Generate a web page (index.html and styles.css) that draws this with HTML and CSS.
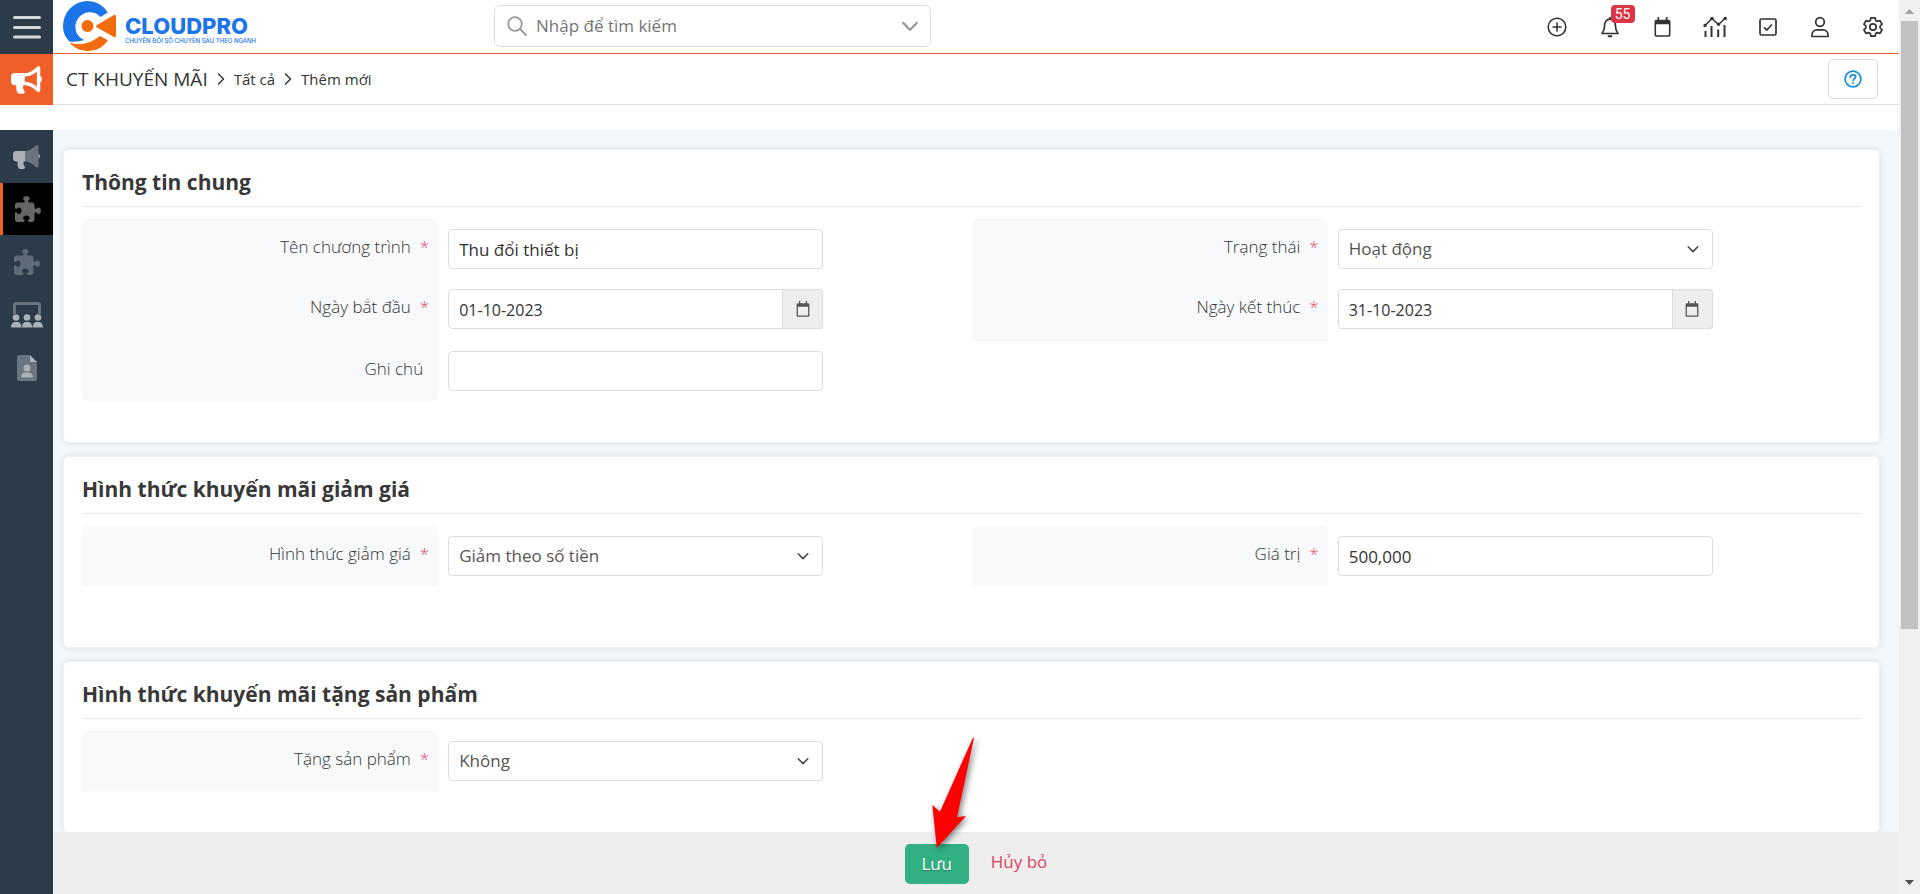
FILE: index.html
```html
<!DOCTYPE html>
<html lang="vi">
<head>
<meta charset="utf-8">
<meta name="viewport" content="width=device-width, initial-scale=1">
<title>CT Khuyến mãi - Thêm mới</title>
<link rel="stylesheet" href="styles.css">
</head>
<body>
<svg class="defs" aria-hidden="true">
  <symbol id="i-puzzle" viewBox="0 0 512 512"><path d="M192 104.8c0-9.2-5.8-17.3-13.2-22.8C167.2 73.3 160 61.3 160 48c0-26.5 28.7-48 64-48s64 21.5 64 48c0 13.3-7.2 25.3-18.8 34c-7.4 5.5-13.2 13.6-13.2 22.8c0 12.8 10.4 23.2 23.2 23.2H336c26.5 0 48 21.5 48 48v56.8c0 12.8 10.4 23.2 23.2 23.2c9.2 0 17.3-5.8 22.8-13.2c8.7-11.6 20.7-18.8 34-18.8c26.5 0 48 28.7 48 64s-21.5 64-48 64c-13.3 0-25.3-7.2-34-18.8c-5.5-7.4-13.6-13.2-22.8-13.2c-12.8 0-23.2 10.4-23.2 23.2V464c0 26.5-21.5 48-48 48H279.2c-12.8 0-23.2-10.4-23.2-23.2c0-9.2 5.8-17.3 13.2-22.8c11.6-8.7 18.8-20.7 18.8-34c0-26.5-28.7-48-64-48s-64 21.5-64 48c0 13.3 7.2 25.3 18.8 34c7.4 5.5 13.2 13.6 13.2 22.8c0 12.8-10.4 23.2-23.2 23.2H48c-26.5 0-48-21.5-48-48V343.2C0 330.4 10.4 320 23.2 320c9.2 0 17.3 5.8 22.8 13.2C54.7 344.8 66.7 352 80 352c26.5 0 48-28.7 48-64s-21.5-64-48-64c-13.3 0-25.3 7.2-34 18.8C40.5 250.2 32.4 256 23.2 256C10.4 256 0 245.6 0 232.8V176c0-26.5 21.5-48 48-48H168.8c12.8 0 23.2-10.4 23.2-23.2z"/></symbol>
  <symbol id="i-chevron-down" viewBox="0 0 16 16"><path d="M2.500 5.500 8 11l5.500-5.500" fill="none" stroke="currentColor" stroke-width="1.700" stroke-linecap="round" stroke-linejoin="round"/></symbol>
  <symbol id="i-chevron-right" viewBox="0 0 8 14"><path d="M1.500 2 6.500 7l-5 5" fill="none" stroke="currentColor" stroke-width="1.500" stroke-linecap="round" stroke-linejoin="round"/></symbol>
  <symbol id="i-calendar" viewBox="0 0 18 20"><path d="M1 18V4.500A1.800 1.800 0 0 1 2.800 2.700H4V0h1.600v2.700h6.800V0H14v2.700h1.200A1.800 1.800 0 0 1 17 4.500V18a1.800 1.800 0 0 1-1.800 1.800H2.800A1.800 1.800 0 0 1 1 18zM2.600 7.200V17.400c0 .5.300.8.800.8h11.200c.5 0 .8-.3.800-.8V7.200z" fill="currentColor" fill-rule="evenodd"/></symbol>
</svg>

<div class="app">
  <header class="topbar">
    <button class="menu-toggle" type="button" aria-label="Menu">
      <svg width="28" height="24" viewBox="0 0 28 24" fill="none" stroke="#d6d9dc" stroke-width="3" stroke-linecap="round"><path d="M1.500 2.500h25M1.500 12.500h25M1.500 22h25"/></svg>
    </button>
    <a class="logo" href="#" aria-label="CloudPro">
      <svg width="54" height="52" viewBox="0 0 54 52">
        <path d="M44.800 12.600A24.500 25 0 0 0 24.500 1 24.500 25 0 0 0 0 26c0 6.500 2.500 12 6.800 15.700 5 .3 10-.2 14.200-1.600A14.500 14.500 0 1 1 37.500 17z" fill="#1b74e8"/>
        <path d="M6.500 42.600c6 2.200 12 2.200 18 .2 5-1.700 9-4 12.500-6.800l8 4.200C40.500 47 33 51 24.500 51 17.500 51 11 48 6.500 42.600z" fill="#f26c0d"/>
        <circle cx="24.500" cy="26" r="6" fill="#f26c0d"/>
        <path d="M34 25 51 15q2-1 2 1.500v19q0 2.500-2 1.500L34 27.500q-2-1.200 0-2.500z" fill="#f26c0d"/>
      </svg>
      <span class="logo-text">
        <span class="logo-name">CLOUDPRO</span>
        <span class="logo-tag">CHUYỂN ĐỔI SỐ CHUYÊN SÂU THEO NGÀNH</span>
      </span>
    </a>
    <div class="search">
      <svg width="20" height="20" viewBox="0 0 20 20" fill="none" stroke="#999" stroke-width="1.800" stroke-linecap="round"><circle cx="8" cy="8" r="6.800"/><path d="m13 13 6 6"/></svg>
      <input type="text" class="search-input" placeholder="Nhập để tìm kiếm" aria-label="Tìm kiếm">
      <svg class="search-caret" width="20" height="20"><use href="#i-chevron-down"/></svg>
    </div>
    <nav class="actions">
      <button type="button" aria-label="Thêm"><svg width="20" height="20" viewBox="0 0 20 20" fill="none" stroke="currentColor" stroke-width="1.600"><circle cx="10" cy="10" r="8.800"/><path d="M10 5.500v9M5.500 10h9"/></svg></button>
      <button type="button" aria-label="Thông báo"><svg width="20" height="22" viewBox="0 0 20 22"><path d="M10 1v2M2 17.500h16c-2.200-2.800-2.600-4-2.600-8A5.400 5.800 0 0 0 10 3.200a5.400 5.800 0 0 0-5.400 6.300c0 4-.4 5.200-2.600 8z" fill="none" stroke="currentColor" stroke-width="1.700" stroke-linejoin="round"/><path d="M7.500 19.300h5a2.500 2.300 0 0 1-5 0z" fill="currentColor"/></svg><span class="badge">55</span></button>
      <button type="button" aria-label="Lịch"><svg width="19" height="20"><use href="#i-calendar"/></svg></button>
      <button type="button" aria-label="Báo cáo"><svg width="24" height="22" viewBox="0 0 24 22" fill="none" stroke="currentColor" stroke-width="1.600"><path d="M2.500 15v6M8.500 10v11M15.200 13.500V21M21.500 9v12" stroke-width="2"/><path d="m2 9.500 7-7 6.500 6L22 2.500"/><g fill="currentColor" stroke="none"><circle cx="2" cy="9.500" r="1.700"/><circle cx="9" cy="2.500" r="1.800"/><circle cx="15.500" cy="8.300" r="1.700"/><circle cx="22.200" cy="2.500" r="1.700"/></g></svg></button>
      <button type="button" aria-label="Công việc"><svg width="18" height="18" viewBox="0 0 18 18" fill="none" stroke="currentColor" stroke-width="1.700"><rect x="1" y="1" width="16" height="16" rx="1.500"/><path d="m5 9.300 2.800 2.700L13 6.500"/></svg></button>
      <button type="button" aria-label="Tài khoản"><svg width="18" height="22" viewBox="0 0 18 22" fill="none" stroke="currentColor" stroke-width="1.700" stroke-linejoin="round"><circle cx="9" cy="6" r="4.300"/><path d="M1 20.500v-1.700a5 5 0 0 1 5-5h6a5 5 0 0 1 5 5v1.700z"/></svg></button>
      <button type="button" aria-label="Cài đặt"><svg width="22" height="22" viewBox="0 0 22 22" fill="none" stroke="currentColor" stroke-width="1.700" stroke-linejoin="round"><circle cx="11" cy="11" r="3.200"/><path d="M8.900 1.800h4.200l.6 2.700 1.600.9 2.700-.8 2.100 3.600-2 1.900v1.800l2 1.900-2.100 3.600-2.700-.8-1.600.9-.6 2.700H8.900l-.6-2.700-1.600-.9-2.700.8-2.100-3.600 2-1.900v-1.800l-2-1.900L4 4.600l2.700.8 1.600-.9z"/></svg></button>
    </nav>
  </header>

  <div class="crumbbar">
    <div class="module-icon">
      <svg width="31" height="30" viewBox="0 0 576 512" fill="#fff"><path d="M576 240c0-23.630-12.950-44.040-32-55.120V32.010C544 23.260 537.020 0 512 0c-7.120 0-14.190 2.380-19.980 7.020l-85.030 68.030C364.280 109.190 310.660 128 256 128H64c-35.350 0-64 28.650-64 64v96c0 35.350 28.650 64 64 64h33.700c-1.390 10.480-2.180 21.140-2.180 32 0 39.770 9.260 77.350 25.560 110.940 5.190 10.690 16.520 17.060 28.400 17.060h74.280c26.050 0 41.690-29.840 25.900-50.560-16.400-21.520-26.150-48.360-26.150-77.440 0-11.110 1.620-21.790 4.410-32H256c54.660 0 108.280 18.810 150.980 52.950l85.030 68.030a32.023 32.023 0 0 0 19.980 7.020c24.920 0 32-22.780 32-32V295.130C563.050 284.040 576 263.630 576 240zm-96 141.420l-33.050-26.440C392.950 311.780 325.120 288 256 288v-96c69.120 0 136.950-23.780 190.950-66.980L480 98.580v282.840z"/></svg>
    </div>
    <nav class="crumbs" aria-label="Breadcrumb">
      <a class="crumb-module" href="#">CT KHUYẾN MÃI</a>
      <svg width="8" height="14"><use href="#i-chevron-right"/></svg>
      <a href="#">Tất cả</a>
      <svg width="8" height="14"><use href="#i-chevron-right"/></svg>
      <a href="#">Thêm mới</a>
    </nav>
    <button class="help" type="button" aria-label="Trợ giúp">
      <svg width="18" height="18" viewBox="0 0 18 18" fill="none" stroke="#1490d4" stroke-width="1.700"><circle cx="9" cy="9" r="7.900"/><path d="M6.300 7.200c0-1.500 1-2.400 2.600-2.400s2.800.8 2.800 2.200c0 1.600-2.600 1.700-2.600 3.500" stroke-linecap="round"/><circle cx="9.100" cy="12.900" r="1" fill="#1490d4" stroke="none"/></svg>
    </button>
  </div>

  <div class="main">
    <nav class="sidebar">
      <a href="#" aria-label="Chiến dịch"><svg width="27" height="26" viewBox="0 0 576 512"><path fill="#68747e" d="M544 32c0-9-7-32-32-32-7 0-14 2-20 7l-85 68c-43 34-96 53-151 53h-10v224h10c55 0 108 19 151 53l85 68c6 5 13 7 20 7 25 0 32-23 32-32z"/><path fill="#abb1b7" d="M256 128H64c-35 0-64 29-64 64v96c0 35 29 64 64 64h34c-8 50 0 100 23 143 5 11 17 17 28 17h75c26 0 41-30 26-51-27-32-31-76-22-109h28zM544 185v110c19-11 32-31 32-55s-13-44-32-55z"/></svg></a>
      <a class="current" href="#" aria-label="CT Khuyến mãi"><svg width="26" height="26" fill="#666"><use href="#i-puzzle"/></svg></a>
      <a href="#" aria-label="Tiện ích"><svg width="26" height="26" fill="#5f6b76"><use href="#i-puzzle"/></svg></a>
      <a href="#" aria-label="Sự kiện"><svg width="32" height="26" viewBox="0 0 32 26"><path d="M2 12V3a3 3 0 0 1 3-3h22a3 3 0 0 1 3 3v9h-3V3H5v9z" fill="#68747e"/><g fill="#abb1b7"><circle cx="5" cy="15.500" r="3.300"/><circle cx="16" cy="15.500" r="3.300"/><circle cx="27" cy="15.500" r="3.300"/><path d="M0 25.500c0-3.500 2-5.500 4-5.500h2.500c2 0 4 2 4 5.500zM10.900 25.500c0-3.500 2-5.500 4-5.500h2.300c2 0 4 2 4 5.500zM21.600 25.500c0-3.500 2-5.500 4-5.500H28c2 0 4 2 4 5.500z"/></g></svg></a>
      <a href="#" aria-label="Hồ sơ"><svg width="20" height="26" viewBox="0 0 20 26"><path d="M2.500 0H13v7h7v16.500a2.500 2.500 0 0 1-2.500 2.500h-15A2.500 2.500 0 0 1 0 23.500v-21A2.500 2.500 0 0 1 2.500 0z" fill="#68747e"/><g fill="#abb1b7"><path d="M13 0v7h7z"/><circle cx="10" cy="13" r="3.500"/><path d="M4 22.500c0-3.300 2-5 4-5h4c2 0 4 1.700 4 5z"/></g></svg></a>
    </nav>

    <form class="editor">
      <div class="cards">
        <section class="card">
          <h2>Thông tin chung</h2>
          <div class="cols">
            <div class="col">
              <div class="row first"><div class="lab"><label for="name">Tên chương trình</label><span class="req">*</span></div><div class="field"><input id="name" type="text" value="Thu đổi thiết bị"></div></div>
              <div class="row dated"><div class="lab"><label for="start">Ngày bắt đầu</label><span class="req">*</span></div><div class="field date"><input id="start" type="text" value="01-10-2023"><button type="button" aria-label="Chọn ngày bắt đầu"><svg width="16" height="16"><use href="#i-calendar"/></svg></button></div></div>
              <div class="row last"><div class="lab optional"><label for="note">Ghi chú</label></div><div class="field"><input id="note" type="text"></div></div>
            </div>
            <div class="col">
              <div class="row first"><div class="lab"><label for="status">Trạng thái</label><span class="req">*</span></div><div class="field select"><select id="status"><option>Hoạt động</option></select><svg width="14" height="14"><use href="#i-chevron-down"/></svg></div></div>
              <div class="row dated"><div class="lab"><label for="end">Ngày kết thúc</label><span class="req">*</span></div><div class="field date"><input id="end" type="text" value="31-10-2023"><button type="button" aria-label="Chọn ngày kết thúc"><svg width="16" height="16"><use href="#i-calendar"/></svg></button></div></div>
            </div>
          </div>
        </section>

        <section class="card roomy">
          <h2>Hình thức khuyến mãi giảm giá</h2>
          <div class="cols">
            <div class="col">
              <div class="row first"><div class="lab"><label for="kind">Hình thức giảm giá</label><span class="req">*</span></div><div class="field select"><select id="kind"><option>Giảm theo số tiền</option></select><svg width="14" height="14"><use href="#i-chevron-down"/></svg></div></div>
            </div>
            <div class="col">
              <div class="row first"><div class="lab"><label for="amount">Giá trị</label><span class="req">*</span></div><div class="field"><input id="amount" type="text" value="500,000"></div></div>
            </div>
          </div>
        </section>

        <section class="card">
          <h2>Hình thức khuyến mãi tặng sản phẩm</h2>
          <div class="cols">
            <div class="col">
              <div class="row first"><div class="lab"><label for="gift">Tặng sản phẩm</label><span class="req">*</span></div><div class="field select"><select id="gift"><option>Không</option></select><svg width="14" height="14"><use href="#i-chevron-down"/></svg></div></div>
            </div>
          </div>
        </section>
      </div>

      <div class="footer">
        <button class="save" type="submit">Lưu<svg class="pointer" width="46" height="116" viewBox="0 0 46 116" aria-hidden="true"><path d="M44 2 27 81.300 36 80 6.800 112 2.300 69l7.700 6.700L42.800 2z" fill="#f00"/></svg></button>
        <a class="cancel" href="#">Hủy bỏ</a>
      </div>
    </form>
  </div>
</div>

<div class="scrollbar" aria-hidden="true">
  <svg width="9" height="5" viewBox="0 0 9 5"><path d="M0 5 4.500 0 9 5z" fill="#a3a3a3"/></svg>
  <div class="track"><div class="thumb"></div></div>
  <svg width="9" height="5" viewBox="0 0 9 5"><path d="M0 0h9L4.500 5z" fill="#505050"/></svg>
</div>
</body>
</html>
```
FILE: styles.css
```css
* { box-sizing: border-box; }

body {
  margin: 0;
  height: 100vh;
  display: flex;
  overflow: hidden;
  background: #fff;
  color: #333;
  font: 300 17px/24px "Open Sans", "Noto Sans", sans-serif;
}

a { color: inherit; text-decoration: none; }
button, input, select { font: inherit; color: inherit; }
button { border: 0; padding: 0; background: none; }
svg { display: block; flex: none; }
.defs { position: absolute; width: 0; height: 0; }

.app { flex: 1; min-width: 0; display: flex; flex-direction: column; }

/* Top bar */
.topbar { display: flex; align-items: stretch; height: 54px; flex: none; background: linear-gradient(#e9632d, #e9632d) 53px 53px / 100% 1px no-repeat; }
.menu-toggle { width: 53px; flex: none; background: #2c3b49; display: grid; place-items: center; }
.logo { display: flex; flex: none; align-items: center; gap: 8px; width: 441px; padding: 0 0 2px 10px; color: #1b74e8; font-family: Inter, sans-serif; }
.logo-text { display: flex; flex-direction: column; padding-top: 6px; }
.logo-name { font-size: 22px; line-height: 24px; font-weight: 800; }
.logo-tag { font-size: 6px; line-height: 6px; font-weight: 500; white-space: nowrap; }
.search { display: flex; align-items: center; width: 437px; height: 42px; margin-top: 5px; padding: 0 10px 0 12px; border: 1px solid #ddd; border-radius: 6px; color: #999; }
.search-input { flex: 1; min-width: 0; border: 0; outline: 0; padding: 0 9px; font-weight: 400; font-size: 17px; background: none; }
.search-input::placeholder { color: #757575; opacity: 1; }
.actions { display: grid; grid-template-columns: repeat(7, 1fr); width: 368px; margin-left: auto; }
.actions button { position: relative; display: grid; place-items: center; color: #333; }
.badge { position: absolute; left: 27px; top: 5px; width: 24px; height: 18px; border-radius: 4px; background: #dc3545; color: #fff; font: 400 14px/18px Roboto, sans-serif; text-align: center; }

/* Breadcrumb */
.crumbbar { display: flex; flex: none; height: 51px; margin-bottom: 25px; border-bottom: 1px solid #dfdfdf; }
.module-icon { width: 53px; height: 51px; background: #f05f2a; display: grid; place-items: center; }
.crumbs { flex: 1; display: flex; align-items: center; gap: 9px; padding: 0 0 1px 13px; font-size: 15px; font-weight: 400; }
.crumb-module { font-size: 19px; }
.help { width: 50px; height: 40px; margin: 5px 21px 0 0; border: 1px solid #d9dcdf; border-radius: 5px; display: grid; place-items: center; }

/* Sidebar */
.main { flex: 1; min-height: 0; display: flex; }
.sidebar { width: 53px; background: #2c3b49; display: flex; flex-direction: column; }
.sidebar a { height: 53px; display: grid; place-items: center; }
.sidebar .current { height: 52px; background: #000; border-left: 3px solid #f05f2a; }

/* Form */
.editor { flex: 1; min-width: 0; display: flex; flex-direction: column; }
.cards { flex: 1; min-height: 0; overflow: hidden; display: flex; flex-direction: column; gap: 13px; padding: 19px 19px 0 10px; background: #f3f7fa; }
.card { flex: none; padding: 0 18px 41px; border: 1px solid #f0f1f1; border-radius: 6px; background: #fff; box-shadow: 0 0 6px rgba(0, 0, 0, .1); }
.roomy { padding-bottom: 61px; }
.card h2 { margin: 0 0 12px; padding: 17px 0 9px; border-bottom: 1px solid #eaeaea; font-size: 21px; line-height: 30px; font-weight: 700; color: #383838; }
.cols { display: grid; grid-template-columns: 1fr 1fr; align-items: start; }
.row { display: grid; grid-template-columns: 356fr 375fr 138fr; column-gap: 10px; }
.lab { display: flex; justify-content: flex-end; gap: 9px; padding: 16px 9px 0 0; background: #f8f9fb; }
.optional { padding-right: 15px; }
.first .lab { border-radius: 6px 6px 0 0; }
.last .lab { border-radius: 0 0 6px 6px; }
.req { color: #e0455c; }
.field { position: relative; display: flex; height: 40px; margin: 10px 0; }
.dated .field { margin-bottom: 12px; }
.field input, .field select { flex: 1; min-width: 0; width: 100%; padding: 2px 10px 0; border: 1px solid #ddd; border-radius: 4px; background: #fff; outline: 0; font-weight: 400; font-size: 17px; }
.field select { appearance: none; padding-top: 0; color: #555; }
.select svg { position: absolute; right: 13px; top: 13px; color: #444; pointer-events: none; }
.date input { border-radius: 4px 0 0 4px; font-size: 16px; }
.date button { width: 40px; display: grid; place-items: center; border: 1px solid #ddd; border-left: 0; border-radius: 0 4px 4px 0; background: #eee; color: #555; }

/* Footer */
.footer { flex: none; display: flex; justify-content: center; gap: 22px; height: 62px; padding-top: 12px; background: #eee; }
.save { position: relative; width: 64px; height: 40px; border-radius: 5px; background: #31b083; color: #fff; font-weight: 400; text-shadow: 0 1px 1px rgba(0, 0, 0, .3); }
.pointer { position: absolute; left: 25px; top: -108px; pointer-events: none; overflow: visible; filter: drop-shadow(2px 2px 3px rgba(0, 0, 0, .5)); }
.cancel { line-height: 36px; font-weight: 400; color: #dc4560; }

/* Scrollbar */
.scrollbar { width: 21px; flex: none; display: flex; flex-direction: column; align-items: center; padding: 9px 0; background: #f0f0f0; }
.track { flex: 1; width: 17px; padding: 7px 0; }
.thumb { height: 71.4%; background: #c1c1c1; }
```
